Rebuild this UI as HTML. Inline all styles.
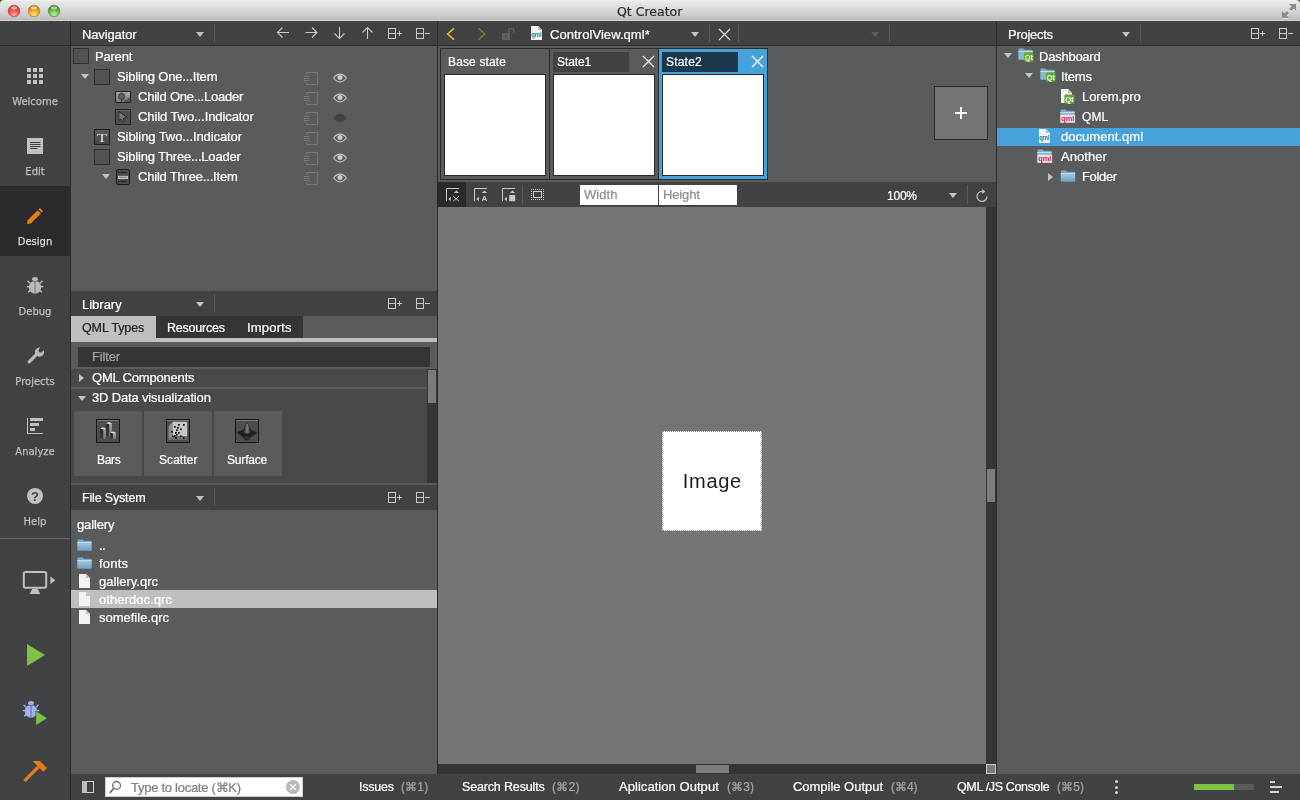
<!DOCTYPE html>
<html>
<head>
<meta charset="utf-8">
<title>Qt Creator</title>
<style>
html,body{margin:0;padding:0;}
body{width:1300px;height:800px;overflow:hidden;background:#595b5d;position:relative;font-family:"Liberation Sans",sans-serif;font-size:13px;color:#fff;}
*{box-sizing:border-box;}
.abs{position:absolute;}
.t{position:absolute;white-space:nowrap;line-height:16px;height:16px;color:#fff;-webkit-text-stroke:0.22px;}
.dark{background:#404244;}
.line{position:absolute;background:#2a2b2d;}
svg{position:absolute;overflow:visible;}
.t,.side,svg,.g{will-change:transform;}
.side{position:absolute;left:0;width:70px;text-align:center;font-family:"DejaVu Sans","Liberation Sans",sans-serif;font-size:10px;color:#bdbfc0;line-height:12px;-webkit-text-stroke:0.25px;}
.cb{position:absolute;width:16px;height:16px;border:1px solid #2d2e30;background:#505254;}
.tri-d{position:absolute;width:0;height:0;border-left:4px solid transparent;border-right:4px solid transparent;border-top:5px solid #c4c5c6;}
.tri-r{position:absolute;width:0;height:0;border-top:4px solid transparent;border-bottom:4px solid transparent;border-left:5px solid #c4c5c6;}
</style>
</head>
<body>
<!-- TITLE BAR -->
<div class="abs" style="left:0;top:0;width:1300px;height:8px;background:#2c5a1c;"></div>
<div class="abs" id="titlebar" style="left:0;top:0;width:1300px;height:21px;border-radius:4px 4px 0 0;background:linear-gradient(#f7f7f7 0px,#e9e9e9 1px,#d8d8d8 10px,#bebebe 20px,#d0d0d0 20px,#d0d0d0 21px);"></div>
<div class="t" style="left:617px;top:4px;color:#2c2c2c;font-family:'DejaVu Sans','Liberation Sans',sans-serif;font-size:12.5px;">Qt Creator</div>
<svg style="left:7px;top:4px" width="56" height="15" viewBox="0 0 56 15">
<defs>
<radialGradient id="tr" cx="0.5" cy="0.8" r="0.75"><stop offset="0" stop-color="#ffb0a8"/><stop offset="0.5" stop-color="#f0564c"/><stop offset="1" stop-color="#c0342c"/></radialGradient>
<radialGradient id="ty" cx="0.5" cy="0.8" r="0.75"><stop offset="0" stop-color="#ffe28a"/><stop offset="0.5" stop-color="#f2a92c"/><stop offset="1" stop-color="#b87412"/></radialGradient>
<radialGradient id="tg" cx="0.5" cy="0.8" r="0.75"><stop offset="0" stop-color="#c4ee9a"/><stop offset="0.5" stop-color="#6cc04a"/><stop offset="1" stop-color="#34801e"/></radialGradient>
</defs>
<circle cx="7" cy="7" r="5.8" fill="url(#tr)" stroke="#a03a34" stroke-width="0.6"/>
<circle cx="27" cy="7" r="5.8" fill="url(#ty)" stroke="#a6782a" stroke-width="0.6"/>
<circle cx="47" cy="7" r="5.8" fill="url(#tg)" stroke="#4a8a34" stroke-width="0.6"/>
<ellipse cx="7" cy="3.8" rx="3" ry="1.6" fill="#fff" opacity="0.55"/>
<ellipse cx="27" cy="3.8" rx="3" ry="1.6" fill="#fff" opacity="0.55"/>
<ellipse cx="47" cy="3.8" rx="3" ry="1.6" fill="#fff" opacity="0.55"/>
</svg>
<svg style="left:1281px;top:3px" width="16" height="16" viewBox="0 0 16 16">
<g fill="#fff" opacity="0.6" transform="translate(0,1)"><path d="M8 1 H15 V8 L12.6 5.6 L10.2 8 L8 5.8 L10.4 3.4 Z"/><path d="M1 8 L3.4 10.4 L5.8 8 L8 10.2 L5.6 12.6 L8 15 H1 Z"/></g>
<g fill="#8c8c8c"><path d="M8 1 H15 V8 L12.6 5.6 L10.2 8 L8 5.8 L10.4 3.4 Z"/><path d="M1 8 L3.4 10.4 L5.8 8 L8 10.2 L5.6 12.6 L8 15 H1 Z"/></g>
</svg>

<!-- LEFT SIDEBAR -->
<div class="abs dark" style="left:0;top:21px;width:70px;height:779px;"></div>
<div class="abs" style="left:0;top:186px;width:70px;height:70px;background:#2a2b2d;"></div>

<!-- TOP TOOLBARS -->
<div class="abs dark" style="left:71px;top:21px;width:1229px;height:24px;"></div>
<div class="line" style="left:0;top:45px;width:1300px;height:1px;"></div>
<div class="line" style="left:70px;top:21px;width:1px;height:779px;"></div>
<div class="line" style="left:437px;top:21px;width:1px;height:754px;"></div>
<div class="line" style="left:996px;top:21px;width:1px;height:754px;"></div>

<!-- BOTTOM STATUS BAR -->
<div class="abs dark" style="left:71px;top:775px;width:1229px;height:25px;"></div>


<!-- sidebar mode labels -->
<div class="side" style="top:96px;">Welcome</div>
<div class="side" style="top:166px;">Edit</div>
<div class="side" style="top:236px;color:#dcdcdc;">Design</div>
<div class="side" style="top:306px;">Debug</div>
<div class="side" style="top:376px;">Projects</div>
<div class="side" style="top:446px;">Analyze</div>
<div class="side" style="top:516px;">Help</div>
<div class="abs" style="left:0;top:538px;width:70px;height:1px;background:#6a6b6d;"></div>
<!-- welcome grid -->
<svg style="left:27px;top:68px" width="16" height="16" viewBox="0 0 16 16" fill="#bfc0c1"><rect x="0" y="0" width="4" height="4"/><rect x="6" y="0" width="4" height="4"/><rect x="12" y="0" width="4" height="4"/><rect x="0" y="6" width="4" height="4"/><rect x="6" y="6" width="4" height="4"/><rect x="12" y="6" width="4" height="4"/><rect x="0" y="12" width="4" height="4"/><rect x="6" y="12" width="4" height="4"/><rect x="12" y="12" width="4" height="4"/></svg>
<!-- edit -->
<svg style="left:27px;top:138px" width="16" height="16" viewBox="0 0 16 16"><rect width="16" height="16" fill="#c0c1c2"/><g fill="#404244"><rect x="3" y="4" width="10.5" height="1"/><rect x="3" y="6" width="10.5" height="1"/><rect x="3" y="8" width="10.5" height="1"/><rect x="3" y="10" width="7.5" height="1"/></g></svg>
<!-- design pencil -->
<svg style="left:26px;top:207px" width="18" height="18" viewBox="0 0 18 18" fill="#e67e14"><path d="M1 17 L1.6 13.2 L11.6 3.2 L14.8 6.4 L4.8 16.4 Z"/><path d="M12.4 2.4 L13.9 0.9 L17.1 4.1 L15.6 5.6 Z"/></svg>
<!-- debug bug -->
<svg style="left:27px;top:277px" width="16" height="17" viewBox="0 0 16 17"><g fill="#b8b9ba"><ellipse cx="8" cy="2.3" rx="3" ry="2.2"/><ellipse cx="8" cy="10.2" rx="6.2" ry="6.4"/></g><g stroke="#b8b9ba" stroke-width="1.4" fill="none"><path d="M3 6.2 L0.5 3.8"/><path d="M13 6.2 L15.5 3.8"/><path d="M2.4 9.6 L-0.2 9.6"/><path d="M13.6 9.6 L16.2 9.6"/><path d="M3.4 13.6 L1 15.2"/><path d="M12.6 13.6 L15 15.2"/></g><path d="M8 5 V16.4" stroke="#858687" stroke-width="1.3"/><path d="M5.4 3.6 L8 5 L10.6 3.6" stroke="#404244" stroke-width="0.7" fill="none"/></svg>
<!-- projects wrench -->
<svg style="left:27px;top:347px" width="18" height="17" viewBox="0 0 18 17"><path d="M2.2 14.8 L9.6 7.4" stroke="#b8b9ba" stroke-width="3.2" stroke-linecap="round" fill="none"/><path d="M16.6 3.2 A4.6 4.6 0 1 1 13.2 0.6 L11.4 3 L12.2 5.2 L14.6 5.6 Z" fill="#b8b9ba"/></svg>
<!-- analyze -->
<svg style="left:27px;top:418px" width="16" height="16" viewBox="0 0 16 16"><g fill="#bfc0c1"><rect x="0" y="0" width="1" height="16"/><rect x="0" y="15" width="16" height="1"/><rect x="3" y="0" width="13" height="3"/><rect x="3" y="5" width="9" height="3"/><rect x="3" y="10" width="5" height="3"/></g></svg>
<!-- help -->
<svg style="left:27px;top:488px" width="16" height="16" viewBox="0 0 16 16"><circle cx="8" cy="8" r="8" fill="#bfc0c1"/><text x="8" y="12.7" text-anchor="middle" font-family="Liberation Sans, sans-serif" font-weight="bold" font-size="13" fill="#404244">?</text></svg>
<!-- monitor -->
<svg style="left:22px;top:570px" width="36" height="25" viewBox="0 0 36 25"><rect x="1.8" y="1.9" width="22.4" height="15.8" rx="1.6" ry="1.6" fill="none" stroke="#bebfc0" stroke-width="2"/><path d="M10.2 19 L15.8 19 L18.4 24 L7.6 24 Z" fill="#bebfc0"/><path d="M28.4 6.2 L33.2 10.2 L28.4 14.2 Z" fill="#bebfc0"/></svg>
<!-- run -->
<svg style="left:27px;top:644px" width="18" height="22" viewBox="0 0 18 22"><path d="M0 0 L18 11 L0 22 Z" fill="#7fc142"/></svg>
<!-- debug run -->
<svg style="left:23px;top:700.6px" width="26" height="26" viewBox="0 0 26 26"><g fill="#a3b1ec"><ellipse cx="8" cy="2.3" rx="3" ry="2.2"/><ellipse cx="8" cy="10.2" rx="6.2" ry="6.4"/></g><g stroke="#a3b1ec" stroke-width="1.4" fill="none"><path d="M3 6.2 L0.5 3.8"/><path d="M13 6.2 L15.5 3.8"/><path d="M2.4 9.6 L-0.2 9.6"/><path d="M13.6 9.6 L16.2 9.6"/><path d="M3.4 13.6 L1 15.2"/><path d="M12.6 13.6 L15 15.2"/></g><path d="M8 5 V16.4" stroke="#6f7db4" stroke-width="1.3"/><path d="M5.4 3.6 L8 5 L10.6 3.6" stroke="#404244" stroke-width="0.7" fill="none"/><path d="M12.8 9.8 L24.4 17.2 L12.8 24.6 Z" fill="#7fc142" stroke="#404244" stroke-width="0.6"/></svg>
<!-- build hammer -->
<svg style="left:23px;top:760px" width="25" height="23" viewBox="0 0 25 23"><path d="M1.4 20.8 L15.4 6.8" stroke="#e67e14" stroke-width="3.2" fill="none"/><path d="M9.6 1 L16.8 1 L24 8 L20.2 11.8 L14 5.6 Z" fill="#e67e14"/></svg>

<!-- part_nav -->
<div class="t" style="left:82px;top:27px;letter-spacing:-0.13px;">Navigator</div>
<div class="tri-d" style="left:196px;top:32px;border-top-color:#c4c5c6;"></div>
<div class="abs" style="left:214px;top:24px;width:1px;height:18px;background:#595b5d;"></div>
<svg style="left:276px;top:26px" width="100" height="14" viewBox="0 0 100 14" fill="none" stroke="#c8c9ca" stroke-width="1.1"><path d="M1.5 6.5 H13 M6.5 1.5 L1.5 6.5 L6.5 11.5"/><path d="M29.5 6.5 H41 M36 1.5 L41 6.5 L36 11.5"/><path d="M63.5 1 V12.5 M58.5 7.5 L63.5 12.5 L68.5 7.5"/><path d="M91.5 13 V1.5 M86.5 6.5 L91.5 1.5 L96.5 6.5"/></svg>
<svg style="left:388px;top:28px" width="44" height="12" viewBox="0 0 44 12" fill="none" stroke="#c8c9ca" stroke-width="1"><rect x="0.5" y="0.5" width="7" height="10"/><path d="M0.5 5.5 H7.5"/><path d="M9 5.5 H14 M11.5 3 V8"/><rect x="28.5" y="0.5" width="7" height="10"/><path d="M28.5 5.5 H35.5"/><path d="M37 5.5 H42"/></svg>
<div class="cb" style="left:73px;top:48px;"></div>
<div class="t" style="left:95px;top:49px;letter-spacing:-0.203px;">Parent</div>
<div class="cb" style="left:94px;top:69px;"></div>
<div class="tri-d" style="left:81px;top:74px;border-top-color:#c4c5c6;"></div>
<div class="t" style="left:117px;top:69px;letter-spacing:-0.166px;">Sibling One...Item</div>
<svg style="left:304px;top:72px" width="14" height="13" viewBox="0 0 14 13" fill="none" stroke="#77797b" stroke-width="1"><path d="M2.5 2.5 V0.5 H13.5 V12.5 H2.5 V10.5"/><path d="M0 4.5 H5 M0 6.5 H5 M0 8.5 H5"/></svg>
<svg style="left:333px;top:73px" width="14" height="10" viewBox="0 0 14 10"><path d="M0.6 5 C3 1.6 5.4 1.1 7 1.1 C8.6 1.1 11 1.6 13.4 5 C11 8.4 8.6 8.9 7 8.9 C5.4 8.9 3 8.4 0.6 5 Z" fill="none" stroke="#c8c9ca" stroke-width="1.1"/><circle cx="7" cy="4.5" r="2.5" fill="#c8c9ca"/></svg>
<svg style="left:115px;top:91px" width="16" height="12" viewBox="0 0 16 12"><defs><linearGradient id="ig" x1="0" y1="0" x2="0" y2="1"><stop offset="0" stop-color="#a6a7a8"/><stop offset="1" stop-color="#78797a"/></linearGradient></defs><rect x="0.5" y="0.5" width="15" height="11" fill="url(#ig)" stroke="#222324"/><path d="M9 11 L9 9.6 C10.4 8.6 12 8.8 13 7.6 C14 6.8 14.6 6.8 15 6.6 V11 Z" fill="#565758"/><rect x="6.1" y="7.6" width="1.1" height="3" fill="#2e2f30"/><path d="M6.6 2.2 C8.6 2.2 9.4 3.6 9.2 4.6 C10.4 5.6 9.6 8.2 7.6 8.2 H5.6 C3.6 8.2 2.8 5.6 4 4.6 C3.8 3.6 4.6 2.2 6.6 2.2 Z" fill="#5c5d5e" stroke="#2c2d2e" stroke-width="0.8"/><rect x="12.2" y="2.4" width="1.6" height="1.6" fill="#bdbebf"/></svg>
<div class="t" style="left:138px;top:89px;letter-spacing:-0.225px;">Child One...Loader</div>
<svg style="left:304px;top:92px" width="14" height="13" viewBox="0 0 14 13" fill="none" stroke="#77797b" stroke-width="1"><path d="M2.5 2.5 V0.5 H13.5 V12.5 H2.5 V10.5"/><path d="M0 4.5 H5 M0 6.5 H5 M0 8.5 H5"/></svg>
<svg style="left:333px;top:93px" width="14" height="10" viewBox="0 0 14 10"><path d="M0.6 5 C3 1.6 5.4 1.1 7 1.1 C8.6 1.1 11 1.6 13.4 5 C11 8.4 8.6 8.9 7 8.9 C5.4 8.9 3 8.4 0.6 5 Z" fill="none" stroke="#c8c9ca" stroke-width="1.1"/><circle cx="7" cy="4.5" r="2.5" fill="#c8c9ca"/></svg>
<svg style="left:115px;top:109px" width="16" height="16" viewBox="0 0 16 16"><rect x="0.5" y="0.5" width="15" height="15" fill="#4e4f51" stroke="#222324"/><rect x="1" y="1" width="14" height="1" fill="#626365"/><path d="M3.7 2.4 L3.9 11.6 L6 10 L7.2 12.8 L9.2 12 L8.2 9.4 L12.2 8.2 Z" fill="#757677" stroke="#262728" stroke-width="0.9" stroke-linejoin="round"/></svg>
<div class="t" style="left:138px;top:109px;letter-spacing:-0.087px;">Child Two...Indicator</div>
<svg style="left:304px;top:112px" width="14" height="13" viewBox="0 0 14 13" fill="none" stroke="#77797b" stroke-width="1"><path d="M2.5 2.5 V0.5 H13.5 V12.5 H2.5 V10.5"/><path d="M0 4.5 H5 M0 6.5 H5 M0 8.5 H5"/></svg>
<svg style="left:333px;top:113px" width="14" height="10" viewBox="0 0 14 10"><path d="M0.4 5 C3 1.4 5.4 0.8 7 0.8 C8.6 0.8 11 1.4 13.6 5 C11 8.6 8.6 9.2 7 9.2 C5.4 9.2 3 8.6 0.4 5 Z" fill="#3f4143"/></svg>
<svg style="left:94px;top:129px" width="16" height="16" viewBox="0 0 16 16"><defs><linearGradient id="tg2" x1="0" y1="0" x2="0" y2="1"><stop offset="0" stop-color="#5c5d5f"/><stop offset="1" stop-color="#444547"/></linearGradient></defs><rect x="0.5" y="0.5" width="15" height="15" fill="url(#tg2)" stroke="#1e1f20"/><text x="8" y="12.9" text-anchor="middle" font-family="Liberation Serif, serif" font-size="13" fill="#dcdcdc" textLength="10.6" lengthAdjust="spacingAndGlyphs">T</text></svg>
<div class="t" style="left:117px;top:129px;letter-spacing:-0.084px;">Sibling Two...Indicator</div>
<svg style="left:304px;top:132px" width="14" height="13" viewBox="0 0 14 13" fill="none" stroke="#77797b" stroke-width="1"><path d="M2.5 2.5 V0.5 H13.5 V12.5 H2.5 V10.5"/><path d="M0 4.5 H5 M0 6.5 H5 M0 8.5 H5"/></svg>
<svg style="left:333px;top:133px" width="14" height="10" viewBox="0 0 14 10"><path d="M0.6 5 C3 1.6 5.4 1.1 7 1.1 C8.6 1.1 11 1.6 13.4 5 C11 8.4 8.6 8.9 7 8.9 C5.4 8.9 3 8.4 0.6 5 Z" fill="none" stroke="#c8c9ca" stroke-width="1.1"/><circle cx="7" cy="4.5" r="2.5" fill="#c8c9ca"/></svg>
<div class="cb" style="left:94px;top:149px;"></div>
<div class="t" style="left:117px;top:149px;letter-spacing:-0.18px;">Sibling Three...Loader</div>
<svg style="left:304px;top:152px" width="14" height="13" viewBox="0 0 14 13" fill="none" stroke="#77797b" stroke-width="1"><path d="M2.5 2.5 V0.5 H13.5 V12.5 H2.5 V10.5"/><path d="M0 4.5 H5 M0 6.5 H5 M0 8.5 H5"/></svg>
<svg style="left:333px;top:153px" width="14" height="10" viewBox="0 0 14 10"><path d="M0.6 5 C3 1.6 5.4 1.1 7 1.1 C8.6 1.1 11 1.6 13.4 5 C11 8.4 8.6 8.9 7 8.9 C5.4 8.9 3 8.4 0.6 5 Z" fill="none" stroke="#c8c9ca" stroke-width="1.1"/><circle cx="7" cy="4.5" r="2.5" fill="#c8c9ca"/></svg>
<svg style="left:116px;top:169px" width="14" height="16" viewBox="0 0 14 16"><rect x="0.5" y="0.5" width="13" height="15" rx="1.6" fill="#4b4c4e" stroke="#19191a"/><g fill="#1c1d1e"><rect x="2.2" y="2.8" width="1.2" height="1.2"/><rect x="4.4" y="2.9" width="6.4" height="1"/><rect x="2.2" y="11.8" width="1.2" height="1.2"/><rect x="4.4" y="11.9" width="6.4" height="1"/></g><rect x="2.5" y="7.3" width="9" height="2.2" fill="#8c8d8e" stroke="#cbcccd" stroke-width="0.9"/></svg>
<div class="tri-d" style="left:102px;top:174px;border-top-color:#c4c5c6;"></div>
<div class="t" style="left:138px;top:169px;letter-spacing:-0.194px;">Child Three...Item</div>
<svg style="left:304px;top:172px" width="14" height="13" viewBox="0 0 14 13" fill="none" stroke="#77797b" stroke-width="1"><path d="M2.5 2.5 V0.5 H13.5 V12.5 H2.5 V10.5"/><path d="M0 4.5 H5 M0 6.5 H5 M0 8.5 H5"/></svg>
<svg style="left:333px;top:173px" width="14" height="10" viewBox="0 0 14 10"><path d="M0.6 5 C3 1.6 5.4 1.1 7 1.1 C8.6 1.1 11 1.6 13.4 5 C11 8.4 8.6 8.9 7 8.9 C5.4 8.9 3 8.4 0.6 5 Z" fill="none" stroke="#c8c9ca" stroke-width="1.1"/><circle cx="7" cy="4.5" r="2.5" fill="#c8c9ca"/></svg>
<!-- part_lib -->
<div class="abs dark" style="left:71px;top:291px;width:366px;height:25px;"></div>
<div class="t" style="left:82px;top:297px;letter-spacing:-0.008px;">Library</div>
<div class="tri-d" style="left:196px;top:302px;border-top-color:#c4c5c6;"></div>
<div class="abs" style="left:214px;top:294px;width:1px;height:18px;background:#595b5d;"></div>
<svg style="left:388px;top:298px" width="44" height="12" viewBox="0 0 44 12" fill="none" stroke="#c8c9ca" stroke-width="1"><rect x="0.5" y="0.5" width="7" height="10"/><path d="M0.5 5.5 H7.5"/><path d="M9 5.5 H14 M11.5 3 V8"/><rect x="28.5" y="0.5" width="7" height="10"/><path d="M28.5 5.5 H35.5"/><path d="M37 5.5 H42"/></svg>
<div class="abs" style="left:71px;top:316px;width:85px;height:22px;background:#bebfc1;"></div>
<div class="abs" style="left:156px;top:316px;width:147px;height:22px;background:#343537;"></div>
<div class="abs" style="left:71px;top:338px;width:366px;height:4px;background:#bebfc1;"></div>
<div class="t" style="left:82px;top:320px;font-size:12.5px;letter-spacing:-0.117px;color:#1e1f20;">QML Types</div>
<div class="t" style="left:167px;top:320px;font-size:12.5px;letter-spacing:-0.219px;">Resources</div>
<div class="t" style="left:247px;top:320px;letter-spacing:0.193px;">Imports</div>
<div class="abs" style="left:78px;top:347px;width:352px;height:20px;background:#343537;"></div>
<div class="t" style="left:92px;top:349px;letter-spacing:-0.138px;color:#a4a6a7;">Filter</div>
<div class="abs" style="left:71px;top:369px;width:356px;height:114px;background:#47494b;"></div>
<div class="abs" style="left:71px;top:387px;width:356px;height:2px;background:#595b5d;"></div>
<div class="tri-r" style="left:79px;top:374px;border-left-color:#c4c5c6;"></div>
<div class="t" style="left:92px;top:370px;letter-spacing:-0.186px;">QML Components</div>
<div class="tri-d" style="left:78px;top:396px;border-top-color:#c4c5c6;"></div>
<div class="t" style="left:92px;top:390px;letter-spacing:-0.161px;">3D Data visualization</div>
<div class="abs" style="left:427px;top:369px;width:10px;height:114px;background:#343537;"></div>
<div class="abs" style="left:428px;top:370px;width:8px;height:33px;background:#7b7c7e;"></div>
<div class="abs" style="left:74px;top:411px;width:68px;height:65px;background:#595b5d;"></div>
<div class="t" style="left:97px;top:452px;font-size:12px;letter-spacing:-0.329px;">Bars</div>
<div class="abs" style="left:144px;top:411px;width:68px;height:65px;background:#595b5d;"></div>
<div class="t" style="left:159px;top:452px;font-size:12px;letter-spacing:0.064px;">Scatter</div>
<div class="abs" style="left:214px;top:411px;width:68px;height:65px;background:#595b5d;"></div>
<div class="t" style="left:227px;top:452px;font-size:12px;letter-spacing:-0.177px;">Surface</div>
<svg style="left:96px;top:419px" width="24" height="24" viewBox="0 0 24 24"><defs><linearGradient id="bg1" x1="0" y1="0" x2="0" y2="1"><stop offset="0" stop-color="#a2a3a4"/><stop offset="1" stop-color="#767778"/></linearGradient><linearGradient id="bg2" x1="0" y1="0" x2="0" y2="1"><stop offset="0" stop-color="#242526"/><stop offset="1" stop-color="#404142"/></linearGradient></defs><rect x="0.5" y="0.5" width="23" height="23" fill="#4c4d4f" stroke="#161718"/><rect x="1" y="1" width="22" height="1" fill="#7a7b7d"/><path d="M10 4.2 L13.2 5.0 L13.2 18.200000000000003 L10 17.0 Z" fill="url(#bg2)"/><path d="M13.2 5.0 L16 4.2 L16 17.0 L13.2 18.200000000000003 Z" fill="url(#bg1)"/><path d="M10 4.2 L13.0 3.1 L16 4.2 L13.2 5.2 Z" fill="#dededf"/><path d="M4 9.4 L7.4 10.200000000000001 L7.4 20.6 L4 19.4 Z" fill="url(#bg2)"/><path d="M7.4 10.200000000000001 L9.8 9.4 L9.8 19.4 L7.4 20.6 Z" fill="url(#bg1)"/><path d="M4 9.4 L6.9 8.3 L9.8 9.4 L7.4 10.4 Z" fill="#dededf"/><path d="M14.2 13.6 L17 14.4 L17 20.6 L14.2 19.4 Z" fill="url(#bg2)"/><path d="M17 14.4 L20 13.6 L20 19.4 L17 20.6 Z" fill="url(#bg1)"/><path d="M14.2 13.6 L17.1 12.5 L20 13.6 L17 14.6 Z" fill="#dededf"/></svg>
<svg style="left:166px;top:419px" width="24" height="24" viewBox="0 0 24 24"><rect x="0.5" y="0.5" width="23" height="23" fill="#4c4d4f" stroke="#161718"/><rect x="1" y="1" width="22" height="1" fill="#7a7b7d"/><path d="M2.6 7 L6.6 2.8 L6.6 17 L2.6 21 Z" fill="#8c8d8e"/><rect x="6.6" y="2.8" width="14.6" height="14.2" fill="#c6c7c8"/><path d="M2.6 21 L6.6 17 L21.2 17 L21.2 21 Z" fill="#6e6f70"/><rect x="12" y="5" width="1.7" height="1.7" fill="#0c0c0c"/><rect x="17" y="5" width="1.7" height="1.7" fill="#0c0c0c"/><rect x="8" y="7" width="1.7" height="1.7" fill="#0c0c0c"/><rect x="11" y="8" width="1.7" height="1.7" fill="#0c0c0c"/><rect x="14" y="9.4" width="1.7" height="1.7" fill="#0c0c0c"/><rect x="10" y="10.4" width="1.7" height="1.7" fill="#0c0c0c"/><rect x="5" y="12" width="1.7" height="1.7" fill="#0c0c0c"/><rect x="9" y="13" width="1.7" height="1.7" fill="#0c0c0c"/><rect x="12" y="13" width="1.7" height="1.7" fill="#0c0c0c"/><rect x="10" y="15" width="1.7" height="1.7" fill="#0c0c0c"/><rect x="8" y="16" width="1.7" height="1.7" fill="#0c0c0c"/><rect x="6" y="16.4" width="1.7" height="1.7" fill="#0c0c0c"/><rect x="14" y="16.4" width="1.7" height="1.7" fill="#0c0c0c"/><rect x="9" y="18" width="1.7" height="1.7" fill="#0c0c0c"/><rect x="17" y="18.4" width="1.7" height="1.7" fill="#0c0c0c"/></svg>
<svg style="left:235px;top:419px" width="24" height="24" viewBox="0 0 24 24"><defs><linearGradient id="sg1" x1="0" y1="0" x2="1" y2="0"><stop offset="0" stop-color="#262728"/><stop offset="0.55" stop-color="#7c7d7e"/><stop offset="1" stop-color="#2a2b2c"/></linearGradient></defs><rect x="0.5" y="0.5" width="23" height="23" fill="#4c4d4f" stroke="#161718"/><rect x="1" y="1" width="22" height="1" fill="#7a7b7d"/><path d="M2 13.6 C5 12.6 7.5 11.6 8.8 10 C9.8 8 10.4 3.8 12 3.8 C13.6 3.8 14.2 8 15.2 10 C16.5 11.6 19 12.6 22 13.6 C19 15.4 16 18 14.8 20 C14 21.8 10 21.8 9.2 20 C8 18 5 15.4 2 13.6 Z" fill="#1f2021"/><ellipse cx="12" cy="14" rx="9.6" ry="2.9" fill="#1f2021"/><path d="M12 4.2 C13.2 4.2 13.8 8 14.6 10.4 C15 12 15.4 13.2 15.6 13.8 C14 14.8 10 14.8 8.4 13.8 C8.6 13.2 9 12 9.4 10.4 C10.2 8 10.8 4.2 12 4.2 Z" fill="url(#sg1)"/><ellipse cx="12" cy="19" rx="2.8" ry="1.8" fill="#343536"/></svg>
<!-- part_fs -->
<div class="abs dark" style="left:71px;top:485px;width:366px;height:25px;"></div>
<div class="t" style="left:82px;top:490px;font-size:12.5px;letter-spacing:-0.17px;">File System</div>
<div class="tri-d" style="left:196px;top:496px;border-top-color:#c4c5c6;"></div>
<div class="abs" style="left:214px;top:488px;width:1px;height:18px;background:#595b5d;"></div>
<svg style="left:388px;top:492px" width="44" height="12" viewBox="0 0 44 12" fill="none" stroke="#c8c9ca" stroke-width="1"><rect x="0.5" y="0.5" width="7" height="10"/><path d="M0.5 5.5 H7.5"/><path d="M9 5.5 H14 M11.5 3 V8"/><rect x="28.5" y="0.5" width="7" height="10"/><path d="M28.5 5.5 H35.5"/><path d="M37 5.5 H42"/></svg>
<div class="t" style="left:77px;top:517px;letter-spacing:-0.149px;">gallery</div>
<div class="abs" style="left:71px;top:590px;width:366px;height:18px;background:#bebfc1;"></div>
<svg style="left:77px;top:539px" width="15" height="12" viewBox="0 0 15 12"><defs><linearGradient id="fg" x1="0" y1="0" x2="0" y2="1"><stop offset="0" stop-color="#a9cbe2"/><stop offset="1" stop-color="#6f9fc2"/></linearGradient></defs><path d="M0.5 1.2 Q0.5 0.4 1.3 0.4 H5.6 L6.8 1.8 H14 Q14.6 1.8 14.6 2.4 V3.5 H0.5 Z" fill="#7ea9c8"/><rect x="0.3" y="3" width="14.4" height="8.8" rx="0.8" fill="url(#fg)"/><rect x="0.3" y="3" width="14.4" height="1" fill="#c5dcec"/></svg>
<div class="t" style="left:99px;top:538px;letter-spacing:-0.5px;">..</div>
<svg style="left:77px;top:557px" width="15" height="12" viewBox="0 0 15 12"><defs><linearGradient id="fg" x1="0" y1="0" x2="0" y2="1"><stop offset="0" stop-color="#a9cbe2"/><stop offset="1" stop-color="#6f9fc2"/></linearGradient></defs><path d="M0.5 1.2 Q0.5 0.4 1.3 0.4 H5.6 L6.8 1.8 H14 Q14.6 1.8 14.6 2.4 V3.5 H0.5 Z" fill="#7ea9c8"/><rect x="0.3" y="3" width="14.4" height="8.8" rx="0.8" fill="url(#fg)"/><rect x="0.3" y="3" width="14.4" height="1" fill="#c5dcec"/></svg>
<div class="t" style="left:99px;top:556px;letter-spacing:0.203px;">fonts</div>
<svg style="left:79px;top:574px" width="11" height="14" viewBox="0 0 11 14"><path d="M0 0 H7 L11 4 V14 H0 Z" fill="#f2f2f2"/><path d="M7 0 L11 4 H7 Z" fill="#bdbdbd"/></svg>
<div class="t" style="left:99px;top:574px;">gallery.qrc</div>
<svg style="left:79px;top:592px" width="11" height="14" viewBox="0 0 11 14"><path d="M0 0 H7 L11 4 V14 H0 Z" fill="#f2f2f2"/><path d="M7 0 L11 4 H7 Z" fill="#bdbdbd"/></svg>
<div class="t" style="left:99px;top:592px;letter-spacing:0.067px;">otherdoc.qrc</div>
<svg style="left:79px;top:610px" width="11" height="14" viewBox="0 0 11 14"><path d="M0 0 H7 L11 4 V14 H0 Z" fill="#f2f2f2"/><path d="M7 0 L11 4 H7 Z" fill="#bdbdbd"/></svg>
<div class="t" style="left:99px;top:610px;letter-spacing:-0.007px;">somefile.qrc</div>
<!-- part_center -->
<svg style="left:446px;top:27px" width="40" height="14" viewBox="0 0 40 14" fill="none" stroke-width="1.5"><path d="M8 1.4 L1.6 7 L8 12.6" stroke="#e8c21c"/><path d="M32.4 1.4 L38.8 7 L32.4 12.6" stroke="#8a7426"/></svg>
<svg style="left:502px;top:28px" width="13" height="12" viewBox="0 0 13 12"><rect x="0" y="5" width="8" height="7" fill="#5f6163"/><rect x="3" y="7.5" width="2" height="2" fill="#404244"/><path d="M6.6 5 V3 A2.6 2.6 0 0 1 11.8 3 V5" fill="none" stroke="#5f6163" stroke-width="1.3"/></svg>
<svg style="left:531px;top:26px" width="11" height="14" viewBox="0 0 11 14"><path d="M0 0 H7 L11 4 V14 H0 Z" fill="#f4f4f4"/><path d="M7 0 L11 4 H7 Z" fill="#bdbdbd"/><text x="5.5" y="11.4" text-anchor="middle" font-family="Liberation Sans, sans-serif" font-weight="bold" font-size="7.5" fill="#12809a" textLength="10.4" lengthAdjust="spacingAndGlyphs">qml</text></svg>
<div class="t" style="left:550px;top:27px;letter-spacing:0.069px;">ControlView.qml*</div>
<div class="tri-d" style="left:691px;top:32px;border-top-color:#c4c5c6;"></div>
<div class="abs" style="left:709px;top:24px;width:1px;height:18px;background:#595b5d;"></div>
<svg style="left:718.5px;top:29.0px" width="11.0" height="11.0" viewBox="0 0 11.0 11.0" stroke="#e0e0e0" stroke-width="1.2" fill="none"><path d="M0 0 L11.0 11.0 M11.0 0 L0 11.0"/></svg>
<div class="abs" style="left:738px;top:24px;width:1px;height:18px;background:#595b5d;"></div>
<div class="tri-d" style="left:871px;top:32px;border-top-color:#5f6163;"></div>
<div class="abs" style="left:889px;top:24px;width:1px;height:18px;background:#595b5d;"></div>
<div class="abs" style="left:440px;top:48px;width:110px;height:132px;background:#595b5d;border:1px solid #2a2b2d;"></div>
<div class="abs" style="left:444px;top:74px;width:102px;height:102px;background:#fff;border:1px solid #2a2b2d;"></div>
<div class="t" style="left:448px;top:54px;font-size:12px;letter-spacing:0.144px;">Base state</div>
<div class="abs" style="left:549px;top:48px;width:110px;height:132px;background:#595b5d;border:1px solid #2a2b2d;"></div>
<div class="abs" style="left:553px;top:74px;width:102px;height:102px;background:#fff;border:1px solid #2a2b2d;"></div>
<div class="abs" style="left:553px;top:52px;width:76px;height:20px;background:#404244;"></div>
<div class="t" style="left:557px;top:54px;font-size:12px;letter-spacing:-0.081px;">State1</div>
<svg style="left:642.5px;top:56.0px" width="11.0" height="11.0" viewBox="0 0 11.0 11.0" stroke="#ffffff" stroke-width="1.2" fill="none"><path d="M0 0 L11.0 11.0 M11.0 0 L0 11.0"/></svg>
<div class="abs" style="left:658px;top:48px;width:110px;height:132px;background:#47a2da;border:1px solid #2a2b2d;"></div>
<div class="abs" style="left:662px;top:74px;width:102px;height:102px;background:#fff;border:1px solid #2a2b2d;"></div>
<div class="abs" style="left:662px;top:52px;width:76px;height:20px;background:#19384d;"></div>
<div class="t" style="left:666px;top:54px;font-size:12px;letter-spacing:0.199px;">State2</div>
<svg style="left:751.5px;top:56.0px" width="11.0" height="11.0" viewBox="0 0 11.0 11.0" stroke="#ffffff" stroke-width="1.2" fill="none"><path d="M0 0 L11.0 11.0 M11.0 0 L0 11.0"/></svg>
<div class="abs" style="left:934px;top:86px;width:54px;height:54px;background:#737476;border:1px solid #2a2b2d;"></div>
<div class="abs" style="left:955px;top:112px;width:12px;height:2px;background:#fff;"></div>
<div class="abs" style="left:960px;top:107px;width:2px;height:12px;background:#fff;"></div>
<div class="abs dark" style="left:438px;top:182px;width:558px;height:25px;"></div>
<div class="abs" style="left:438px;top:182px;width:28px;height:25px;background:#2a2b2d;"></div>
<svg style="left:446px;top:188px" width="14" height="14" viewBox="0 0 14 14" fill="none" stroke="#c8c9ca" stroke-width="1"><path d="M0.5 13.2 V0.5 H13"/><path d="M4.9 8.7 V13.3 L2.3 11 Z" fill="#c8c9ca" stroke="none"/><path d="M7.8 5 H13.2 L10.5 2.5 Z" fill="#c8c9ca" stroke="none"/><path d="M7.2 8.2 L13 13.2 M13 8.2 L7.2 13.2" stroke-width="1"/></svg>
<svg style="left:474px;top:188px" width="14" height="14" viewBox="0 0 14 14" fill="none" stroke="#c8c9ca" stroke-width="1"><path d="M0.5 13.2 V0.5 H13"/><path d="M4.9 8.7 V13.3 L2.3 11 Z" fill="#c8c9ca" stroke="none"/><path d="M7.8 5 H13.2 L10.5 2.5 Z" fill="#c8c9ca" stroke="none"/><text x="10.4" y="13.4" text-anchor="middle" font-family="Liberation Sans, sans-serif" font-weight="bold" font-size="8" fill="#c8c9ca" stroke="none">A</text></svg>
<svg style="left:502px;top:188px" width="14" height="14" viewBox="0 0 14 14" fill="none" stroke="#c8c9ca" stroke-width="1"><path d="M0.5 13.2 V0.5 H13"/><path d="M4.9 8.7 V13.3 L2.3 11 Z" fill="#c8c9ca" stroke="none"/><path d="M7.8 5 H13.2 L10.5 2.5 Z" fill="#c8c9ca" stroke="none"/><rect x="7.2" y="7" width="6" height="6.2" fill="#c8c9ca" stroke="none"/></svg>
<div class="abs" style="left:522px;top:185px;width:1px;height:19px;background:#595b5d;"></div>
<svg style="left:531px;top:189px" width="13" height="11" viewBox="0 0 13 11" fill="#c8c9ca"><rect x="0" y="0" width="1" height="1"/><rect x="0" y="10" width="1" height="1"/><rect x="2" y="0" width="1" height="1"/><rect x="2" y="10" width="1" height="1"/><rect x="4" y="0" width="1" height="1"/><rect x="4" y="10" width="1" height="1"/><rect x="6" y="0" width="1" height="1"/><rect x="6" y="10" width="1" height="1"/><rect x="8" y="0" width="1" height="1"/><rect x="8" y="10" width="1" height="1"/><rect x="10" y="0" width="1" height="1"/><rect x="10" y="10" width="1" height="1"/><rect x="12" y="0" width="1" height="1"/><rect x="12" y="10" width="1" height="1"/><rect x="0" y="2" width="1" height="1"/><rect x="12" y="2" width="1" height="1"/><rect x="0" y="4" width="1" height="1"/><rect x="12" y="4" width="1" height="1"/><rect x="0" y="6" width="1" height="1"/><rect x="12" y="6" width="1" height="1"/><rect x="0" y="8" width="1" height="1"/><rect x="12" y="8" width="1" height="1"/><rect x="2.5" y="2.5" width="8" height="6" fill="none" stroke="#c8c9ca"/></svg>
<div class="abs" style="left:580px;top:185px;width:78px;height:20px;background:#fff;"></div>
<div class="abs" style="left:659px;top:185px;width:78px;height:20px;background:#fff;"></div>
<div class="t" style="left:584px;top:187px;letter-spacing:0.041px;color:#8c8c8c;">Width</div>
<div class="t" style="left:663px;top:187px;letter-spacing:-0.136px;color:#8c8c8c;">Height</div>
<div class="t" style="left:887px;top:188px;font-size:12px;letter-spacing:-0.234px;">100%</div>
<div class="tri-d" style="left:949px;top:193px;border-top-color:#c4c5c6;"></div>
<div class="abs" style="left:967px;top:185px;width:1px;height:19px;background:#595b5d;"></div>
<svg style="left:975px;top:188px" width="14" height="14" viewBox="0 0 14 14" fill="none" stroke="#c8c9ca" stroke-width="1.2"><path d="M7 3.4 A5 5 0 1 0 12 8.6"/><path d="M7.2 0.9 L10.2 3.4 L7.2 5.9 Z" fill="#c8c9ca" stroke="none"/></svg>
<div class="abs" style="left:438px;top:207px;width:548px;height:557px;background:#737577;"></div>
<div class="abs" style="left:986px;top:207px;width:10px;height:557px;background:#343537;"></div>
<div class="abs" style="left:987px;top:469px;width:8px;height:33px;background:#7b7c7e;"></div>
<div class="abs" style="left:438px;top:764px;width:548px;height:10px;background:#343537;"></div>
<div class="abs" style="left:696px;top:765px;width:33px;height:8px;background:#7b7c7e;"></div>
<div class="abs" style="left:986px;top:764px;width:10px;height:10px;background:#7b7c7e;border:1px solid #c8c9ca;"></div>
<div class="abs" style="left:662px;top:431px;width:100px;height:100px;background:#fff;border:1px dotted #8a8b8c;"></div>
<div class="abs g" style="left:662px;top:431px;width:100px;height:100px;text-align:center;color:#1e1e1e;font-size:20px;line-height:100px;letter-spacing:0.7px;text-indent:0.7px;">Image</div>
<!-- part_proj -->
<div class="t" style="left:1008px;top:27px;letter-spacing:-0.281px;">Projects</div>
<div class="tri-d" style="left:1122px;top:32px;border-top-color:#c4c5c6;"></div>
<div class="abs" style="left:1140px;top:24px;width:1px;height:18px;background:#595b5d;"></div>
<svg style="left:1251px;top:28px" width="44" height="12" viewBox="0 0 44 12" fill="none" stroke="#c8c9ca" stroke-width="1"><rect x="0.5" y="0.5" width="7" height="10"/><path d="M0.5 5.5 H7.5"/><path d="M9 5.5 H14 M11.5 3 V8"/><rect x="28.5" y="0.5" width="7" height="10"/><path d="M28.5 5.5 H35.5"/><path d="M37 5.5 H42"/></svg>
<div class="abs" style="left:997px;top:128px;width:303px;height:18px;background:#47a2da;"></div>
<div class="tri-d" style="left:1004px;top:53px;border-top-color:#c4c5c6;"></div>
<svg style="left:1018px;top:48px" width="16" height="14" viewBox="0 0 16 14"><path d="M0.5 1.2 Q0.5 0.4 1.3 0.4 H5.6 L6.8 1.8 H14 Q14.6 1.8 14.6 2.4 V3.5 H0.5 Z" fill="#7ea9c8"/><rect x="0.3" y="3" width="14.4" height="8.8" rx="0.8" fill="#8db7d5"/><rect x="0.3" y="3" width="14.4" height="1" fill="#c5dcec"/><rect x="6" y="4.6" width="9.6" height="9.2" rx="1" fill="#62a832"/><text x="10.8" y="12.2" text-anchor="middle" font-family="Liberation Sans, sans-serif" font-weight="bold" font-size="7.5" fill="#fff" textLength="8.1" lengthAdjust="spacingAndGlyphs">Qt</text></svg>
<div class="t" style="left:1039px;top:49px;letter-spacing:-0.239px;">Dashboard</div>
<div class="tri-d" style="left:1025px;top:73px;border-top-color:#c4c5c6;"></div>
<svg style="left:1040px;top:68px" width="16" height="14" viewBox="0 0 16 14"><path d="M0.5 1.2 Q0.5 0.4 1.3 0.4 H5.6 L6.8 1.8 H14 Q14.6 1.8 14.6 2.4 V3.5 H0.5 Z" fill="#7ea9c8"/><rect x="0.3" y="3" width="14.4" height="8.8" rx="0.8" fill="#8db7d5"/><rect x="0.3" y="3" width="14.4" height="1" fill="#c5dcec"/><rect x="6" y="4.6" width="9.6" height="9.2" rx="1" fill="#62a832"/><text x="10.8" y="12.2" text-anchor="middle" font-family="Liberation Sans, sans-serif" font-weight="bold" font-size="7.5" fill="#fff" textLength="8.1" lengthAdjust="spacingAndGlyphs">Qt</text></svg>
<div class="t" style="left:1061px;top:69px;letter-spacing:-0.224px;">Items</div>
<svg style="left:1061px;top:89px" width="14" height="15" viewBox="0 0 14 15"><path d="M0 0 H7 L11 4 V14 H0 Z" fill="#f4f4f4"/><path d="M7 0 L11 4 H7 Z" fill="#bdbdbd"/><rect x="3.4" y="5.6" width="10" height="9.2" rx="1" fill="#62a832"/><text x="8.4" y="13.2" text-anchor="middle" font-family="Liberation Sans, sans-serif" font-weight="bold" font-size="7.5" fill="#fff" textLength="8.5" lengthAdjust="spacingAndGlyphs">Qt</text></svg>
<div class="t" style="left:1082px;top:89px;letter-spacing:-0.056px;">Lorem.pro</div>
<svg style="left:1060px;top:109px" width="16" height="14" viewBox="0 0 16 14"><path d="M0.5 1.2 Q0.5 0.4 1.3 0.4 H5.6 L6.8 1.8 H14 Q14.6 1.8 14.6 2.4 V3.5 H0.5 Z" fill="#7ea9c8"/><rect x="0.3" y="3" width="14.4" height="3.4" rx="0.8" fill="#8db7d5"/><rect x="0.3" y="3" width="14.4" height="1" fill="#c5dcec"/><rect x="0.3" y="5.8" width="14.8" height="8" fill="#e6e6e6"/><text x="7.8" y="12.2" text-anchor="middle" font-family="Liberation Sans, sans-serif" font-weight="bold" font-size="7.6" fill="#d81b60" textLength="13.2" lengthAdjust="spacingAndGlyphs">qml</text></svg>
<div class="t" style="left:1082px;top:109px;font-size:12px;letter-spacing:0.142px;">QML</div>
<svg style="left:1039px;top:129px" width="11" height="14" viewBox="0 0 11 14"><path d="M0 0 H7 L11 4 V14 H0 Z" fill="#f4f4f4"/><path d="M7 0 L11 4 H7 Z" fill="#bdbdbd"/><text x="5.5" y="11.4" text-anchor="middle" font-family="Liberation Sans, sans-serif" font-weight="bold" font-size="7.5" fill="#12809a" textLength="10.4" lengthAdjust="spacingAndGlyphs">qml</text></svg>
<div class="t" style="left:1061px;top:129px;letter-spacing:0.04px;">document.qml</div>
<svg style="left:1037px;top:149px" width="16" height="14" viewBox="0 0 16 14"><path d="M0.5 1.2 Q0.5 0.4 1.3 0.4 H5.6 L6.8 1.8 H14 Q14.6 1.8 14.6 2.4 V3.5 H0.5 Z" fill="#7ea9c8"/><rect x="0.3" y="3" width="14.4" height="3.4" rx="0.8" fill="#8db7d5"/><rect x="0.3" y="3" width="14.4" height="1" fill="#c5dcec"/><rect x="0.3" y="5.8" width="14.8" height="8" fill="#e6e6e6"/><text x="7.8" y="12.2" text-anchor="middle" font-family="Liberation Sans, sans-serif" font-weight="bold" font-size="7.6" fill="#d81b60" textLength="13.2" lengthAdjust="spacingAndGlyphs">qml</text></svg>
<div class="t" style="left:1061px;top:149px;letter-spacing:0.042px;">Another</div>
<div class="tri-r" style="left:1048px;top:173px;border-left-color:#c4c5c6;"></div>
<svg style="left:1060px;top:170px" width="16" height="12" viewBox="0 0 15 12"><defs><linearGradient id="fg" x1="0" y1="0" x2="0" y2="1"><stop offset="0" stop-color="#a9cbe2"/><stop offset="1" stop-color="#6f9fc2"/></linearGradient></defs><path d="M0.5 1.2 Q0.5 0.4 1.3 0.4 H5.6 L6.8 1.8 H14 Q14.6 1.8 14.6 2.4 V3.5 H0.5 Z" fill="#7ea9c8"/><rect x="0.3" y="3" width="14.4" height="8.8" rx="0.8" fill="url(#fg)"/><rect x="0.3" y="3" width="14.4" height="1" fill="#c5dcec"/></svg>
<div class="t" style="left:1082px;top:169px;letter-spacing:-0.352px;">Folder</div>
<!-- part_status -->
<div class="abs dark" style="left:71px;top:774px;width:1229px;height:26px;"></div>
<svg style="left:82px;top:781px" width="12" height="12" viewBox="0 0 12 12"><rect x="0.5" y="0.5" width="11" height="11" fill="none" stroke="#d4d5d6"/><rect x="0" y="0" width="5" height="12" fill="#bebfc1"/></svg>
<div class="abs" style="left:105px;top:777px;width:198px;height:20px;background:#fff;border:1px solid #d0d0d0;"></div>
<svg style="left:109px;top:780px" width="13" height="14" viewBox="0 0 13 14" fill="none" stroke="#6e6e6e" stroke-width="1.3"><circle cx="7.6" cy="5.4" r="3.9"/><path d="M4.8 8.4 L0.8 12.8" stroke-width="1.8"/></svg>
<div class="t" style="left:131px;top:780px;letter-spacing:-0.272px;color:#808080;">Type to locate (&#8984;K)</div>
<svg style="left:286px;top:780px" width="14" height="14" viewBox="0 0 14 14"><circle cx="7" cy="7" r="7" fill="#b9b9b9"/><path d="M4.2 4.2 L9.8 9.8 M9.8 4.2 L4.2 9.8" stroke="#fff" stroke-width="1.3"/></svg>
<div class="t" style="left:359px;top:779px;font-size:12.5px;letter-spacing:-0.228px;">Issues</div>
<div class="t" style="left:401px;top:779px;font-size:12px;letter-spacing:0.176px;color:#a4a6a7;">(&#8984;1)</div>
<div class="t" style="left:462px;top:779px;font-size:12.5px;letter-spacing:-0.159px;">Search Results</div>
<div class="t" style="left:552px;top:779px;font-size:12px;letter-spacing:0.309px;color:#a4a6a7;">(&#8984;2)</div>
<div class="t" style="left:619px;top:779px;letter-spacing:0.049px;">Aplication Output</div>
<div class="t" style="left:727px;top:779px;font-size:12px;letter-spacing:0.076px;color:#a4a6a7;">(&#8984;3)</div>
<div class="t" style="left:793px;top:779px;letter-spacing:-0.025px;">Compile Output</div>
<div class="t" style="left:891px;top:779px;font-size:12px;letter-spacing:-0.024px;color:#a4a6a7;">(&#8984;4)</div>
<div class="t" style="left:957px;top:779px;font-size:12.5px;letter-spacing:-0.35px;">QML /JS Console</div>
<div class="t" style="left:1057px;top:779px;font-size:12px;letter-spacing:0.076px;color:#a4a6a7;">(&#8984;5)</div>
<div class="abs" style="left:1115px;top:780px;width:3px;height:3px;border-radius:1.5px;background:#d4d5d6;"></div>
<div class="abs" style="left:1115px;top:786px;width:3px;height:3px;border-radius:1.5px;background:#d4d5d6;"></div>
<div class="abs" style="left:1115px;top:791px;width:3px;height:3px;border-radius:1.5px;background:#d4d5d6;"></div>
<div class="abs" style="left:1194px;top:784px;width:60px;height:6px;background:#595b5d;"></div>
<div class="abs" style="left:1194px;top:784px;width:40px;height:6px;background:#7fc342;"></div>
<div class="abs" style="left:1270px;top:781px;width:5px;height:2px;background:#d4d5d6;"></div>
<div class="abs" style="left:1270px;top:786px;width:12px;height:2px;background:#d4d5d6;"></div>
<div class="abs" style="left:1270px;top:791px;width:9px;height:2px;background:#d4d5d6;"></div>
</body>
</html>
